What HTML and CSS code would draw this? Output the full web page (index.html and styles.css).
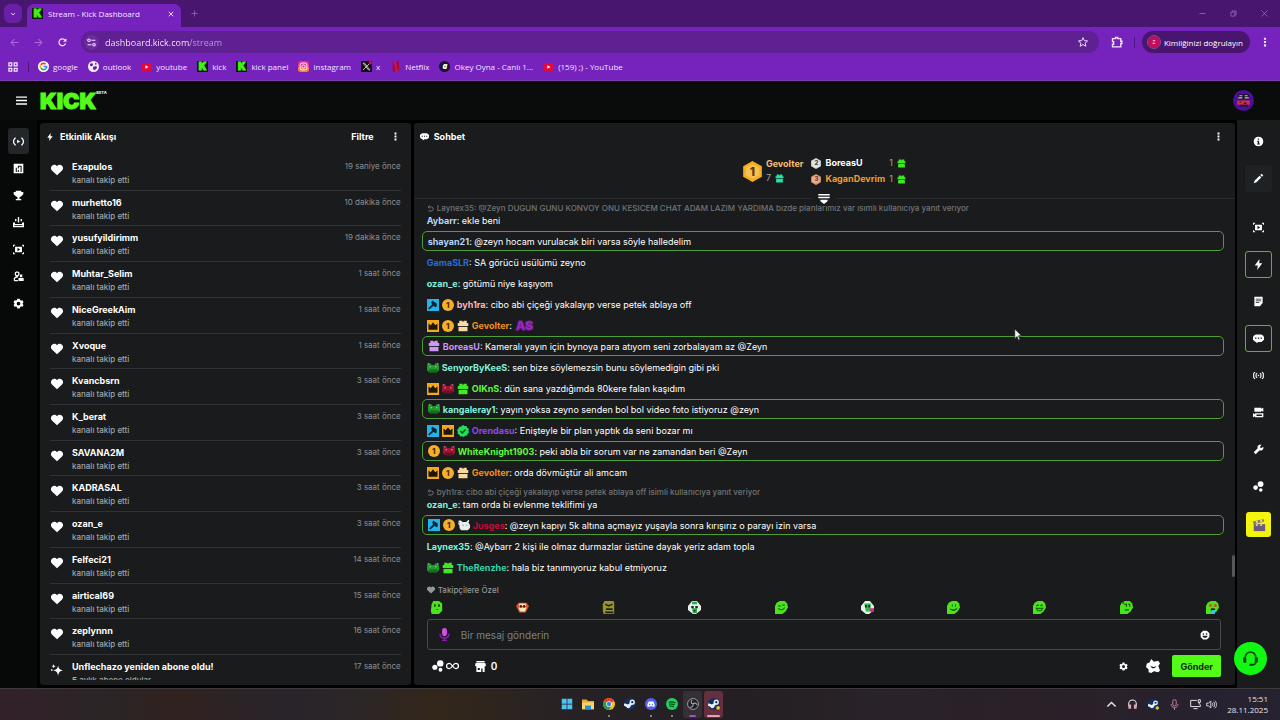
FILE: index.html
```html
<!DOCTYPE html>
<html lang="tr">
<head>
  <meta charset="UTF-8">
  <meta name="viewport" content="width=device-width, initial-scale=1.0">
  <title>Stream - Kick Dashboard</title>
  <link rel="stylesheet" href="styles.css">
</head>
<body>
  <!-- Icon sprite -->
  <svg class="sprite" aria-hidden="true">
    <symbol id="i-heart" viewBox="0 0 16 16"><path fill="currentColor" d="M8 15 1.600 9A4.600 4.600 0 0 1 1.400 2.400C3.200.5 6 .5 8 3c2-2.500 4.800-2.500 6.600-.6a4.600 4.600 0 0 1-.2 6.600z"/></symbol>
    <symbol id="i-spark" viewBox="0 0 16 16"><path fill="currentColor" d="M9.500 2c.9 4.400 1.800 5.400 6.500 6.500-4.700 1-5.600 2-6.500 7-.9-5-1.800-6-6.500-7C7.700 7.400 8.600 6.400 9.500 2zM3.500 0c.4 2 .8 2.500 2.800 3-2 .5-2.400 1-2.800 3C3 4 2.600 3.500.7 3 2.600 2.500 3 2 3.500 0zM0 7h2v2H0z"/></symbol>
    <symbol id="i-bolt" viewBox="0 0 16 16"><path fill="currentColor" d="M9.500 0 2.500 9.500H7L6 16l7.500-9.700H9z"/></symbol>
    <symbol id="i-dots" viewBox="0 0 16 16"><path fill="currentColor" d="M6.300 1h3.400v3.400H6.300zM6.300 6.300h3.400v3.400H6.300zM6.300 11.600h3.400V15H6.300z"/></symbol>
    <symbol id="i-chat" viewBox="0 0 16 16"><path fill="currentColor" fill-rule="evenodd" d="M4 2h8l3 2v1h1v5h-1v1l-3 2H8l-3 2v-2H4l-3-2v-1H0V5h1V4zM3 6.500v2h2v-2zm4 0v2h2v-2zm4 0v2h2v-2z"/></symbol>
    <symbol id="i-live" viewBox="0 0 16 16"><path fill="none" stroke="currentColor" stroke-width="1.800" d="M4 3H3L1 6v4l2 3h1M12 3h1l2 3v4l-2 3h-1"/><path fill="currentColor" d="M6 5.500v5L10.500 8z"/></symbol>
    <symbol id="i-chart" viewBox="0 0 16 16"><path fill="currentColor" fill-rule="evenodd" d="M1 1h14v14H1zm3 6v6h1.500V7zm3-3v4h1.500V5.500H11V13h1.500V4zM7 10v3h1.500v-3z"/></symbol>
    <symbol id="i-cup" viewBox="0 0 16 16"><path fill="currentColor" d="M4 1h8v2h3v3l-3 3-2.500 1.500V13H12v2H4v-2h2.500v-2.500L4 9 1 6V3h3z"/></symbol>
    <symbol id="i-tray" viewBox="0 0 16 16"><path fill="currentColor" fill-rule="evenodd" d="M7 0h2v8H7zM3 3h2v3H3zM11 3h2v3h-2zM0 8h3v2h10V8h3v7H0zm2 4v1h12v-1z"/></symbol>
    <symbol id="i-clip" viewBox="0 0 16 16"><path fill="currentColor" fill-rule="evenodd" d="M3 4h10v8H3zm3.500 1.500v5l4-2.500zM0 1h3v1.400H1.400V4H0zM13 1h3v3h-1.400V2.400H13zM0 12h1.400v1.600H3V15H0zM14.600 12H16v3h-3v-1.400h1.600z"/></symbol>
    <symbol id="i-users" viewBox="0 0 16 16"><path fill="none" stroke="currentColor" stroke-width="1.800" d="M3.500 2.500 5 1.500h2l1.500 1v3L7 7H5L3.500 5.500zM2 14v-3l2-2h3M2 14h5"/><path fill="currentColor" d="M10 5h3.500v4H10zM8 10h7.500v4.500H8z"/></symbol>
    <symbol id="i-gear" viewBox="0 0 16 16"><path fill="currentColor" fill-rule="evenodd" d="M6.300 1h3.400l.4 2 1.600.8 2-.6 1.600 2.900L14 7.500v1.200l1.300 1.400-1.600 2.800-2-.5-1.500.8-.5 1.900H6.300l-.5-1.900-1.500-.8-2 .5L.8 10.100 2.100 8.700V7.500L.8 6.100l1.600-2.900 2 .6L5.900 3zM8 5.400a2.700 2.700 0 1 0 0 5.400 2.700 2.700 0 0 0 0-5.400z"/></symbol>
    <symbol id="i-info" viewBox="0 0 16 16"><path fill="currentColor" fill-rule="evenodd" d="M8 1a7 7 0 1 1 0 14A7 7 0 0 1 8 1zM7 3.500v2h2v-2zM6 7v1.500h1V11H6v1.500h4V11H9V7z"/></symbol>
    <symbol id="i-pen" viewBox="0 0 16 16"><path fill="currentColor" d="M12.500 1 15 3.500l-2 2L10.500 3zM9.500 4 12 6.500 5 13.500 1 15l1.500-4z"/></symbol>
    <symbol id="i-note" viewBox="0 0 16 16"><path fill="currentColor" fill-rule="evenodd" d="M2 1h12v9l-4 5H2zm2 3v1h8V4zm0 2.500v1h8v-1zM4 9v1h5V9z"/></symbol>
    <symbol id="i-signal" viewBox="0 0 16 16"><path fill="none" stroke="currentColor" stroke-width="1.600" d="M3 3 1 5v6l2 2M6 4.500 4.500 6v4L6 11.500M13 3l2 2v6l-2 2M10 4.500 11.500 6v4L10 11.500"/><path fill="currentColor" d="M7 7h2v2H7z"/></symbol>
    <symbol id="i-cams" viewBox="0 0 16 16"><path fill="currentColor" fill-rule="evenodd" d="M2 1h10v1.500L15 1v6l-3-1.500V7H2zM0 9l3 1.500V9h12v6H3v-1.500L0 15zm5 2v2h8v-2z"/></symbol>
    <symbol id="i-wrench" viewBox="0 0 16 16"><path fill="currentColor" d="M9 1h3.500L10.300 3.500l.4 2 2 .4L15 3.600v3.600L12.500 9.500H9.300L4 15l-3-3 5.600-5.400V3.400z"/></symbol>
    <symbol id="i-points" viewBox="0 0 16 16"><g fill="currentColor"><circle cx="11" cy="4.500" r="4.300"/><circle cx="3.800" cy="9.600" r="3.400"/><circle cx="11.300" cy="13" r="2.600"/></g></symbol>
    <symbol id="i-reply" viewBox="0 0 16 16"><path fill="none" stroke="currentColor" stroke-width="2.200" d="M6 1 2.500 4.500 6 8M3 4.500h7.500L14 7v4l-2.500 2.500H3"/></symbol>
    <symbol id="i-gift" viewBox="0 0 16 16"><path fill="currentColor" d="M3 1h4l1 2 1-2h4v3h2v4H1V4h2zM2 9h12v6H2z"/><path d="M1 8h14v1H1z" fill="#000" opacity=".35"/></symbol>
    <symbol id="i-smile" viewBox="0 0 16 16"><path fill="currentColor" fill-rule="evenodd" d="M5 1h6l4 4v6l-4 4H5l-4-4V5zM4.500 5v2.500h2V5zm5 0v2.500h2V5zM4 9c.5 4.500 7.500 4.500 8 0z"/></symbol>
    <symbol id="b-mod" viewBox="0 0 16 16"><path fill="#21b4ea" d="M0 0h16v16H0z"/><path fill="#0b2532" d="m7 2 6 4v4l-2 1-2-2-6 5-1.500-1.500L7 7 5.500 5z"/></symbol>
    <symbol id="b-crown" viewBox="0 0 16 16"><path fill="#f6a81c" d="M0 0h16v16H0z"/><path fill="#1c1603" d="M2 4.500 5 7l3-4 3 4 3-2.500V13H2z"/></symbol>
    <symbol id="b-frog" viewBox="0 0 16 16"><path fill="currentColor" d="M1 2h4l1 2h4l1-2h4l1 3v6l-3 3H3l-3-3V5z"/><path fill="#000" opacity=".3" d="M2 10h12v4H3z"/><path fill="#fff" d="M3.500 5.500h1.500V7H3.500zM11 5.500h1.500V7H11zM1 2h2v1H1zM13 2h2v1h-2z" opacity=".8"/></symbol>
    <symbol id="b-check" viewBox="0 0 16 16"><path fill="#1fe05b" d="m8 0 2.100 1.400 2.500-.2 1 2.300 2.100 1.400L15.300 7.500l.7 2.400-1.900 1.600-.6 2.500-2.500.3L9 16l-2.300-1-2.500.2-1.100-2.300L.8 11.500l.3-2.500L0 6.600l1.900-1.600.5-2.500 2.500-.2z"/><path fill="none" stroke="#0b4a1e" stroke-width="2" d="m4.500 8 2.500 2.500L11.500 6"/></symbol>
    <symbol id="b-cat" viewBox="0 0 16 16"><path fill="#e8eeee" d="M1 2h3l2 2h5l3-3 1 1-1 3 2 3v4l-3 3H4l-2-3V9L0 6z"/><path fill="#6b8c92" d="M6 7.500h1.500V9H6zM11 7.500h1.500V9H11zM0 4h2v2H0z"/></symbol>
    <symbol id="b-hex" viewBox="0 0 16 18"><path fill="currentColor" d="m8 0 8 4.500v9L8 18l-8-4.500v-9z"/><path fill="#fff" opacity=".25" d="m8 2.500 5.800 3.300v6.400L8 15.500l-5.800-3.300V5.800z"/></symbol>
    <symbol id="l-yt" viewBox="0 0 16 12"><rect width="16" height="12" rx="3" fill="#e5093b"/><path fill="#fff" d="M6.300 3.300v5.400L11 6z"/></symbol>
    <symbol id="l-steam" viewBox="0 0 16 16"><circle cx="8" cy="8" r="8" fill="#12305e"/><path d="M0 8.500 6 11l5-5" stroke="#e8eef5" stroke-width="3.500" fill="none"/><circle cx="11" cy="5.500" r="3.500" fill="#e8eef5"/><circle cx="11" cy="5.500" r="1.500" fill="#12305e"/><circle cx="5.800" cy="11" r="2.600" fill="#e8eef5"/></symbol>
    <symbol id="e-blob" viewBox="0 0 16 16"><path fill="#4be31b" d="M6 0h6l3 3 1 5-3 5-4 3H0V6l2-4z"/></symbol>
  </svg>

  <div class="browser">
    <header class="chrome">
      <div class="tab-strip">
        <button class="tab-search" aria-label="Sekme ara"><svg viewBox="0 0 16 16"><path d="m3 5.500 5 5 5-5" fill="none" stroke="currentColor" stroke-width="2.500"/></svg></button>
        <div class="tab">
          <span class="k-icon">K</span>
          <span class="tab-title">Stream - Kick Dashboard</span>
          <button class="tab-close" aria-label="Kapat"><svg viewBox="0 0 16 16"><path d="m2 2 12 12M14 2 2 14" stroke="currentColor" stroke-width="2.500"/></svg></button>
        </div>
        <button class="new-tab" aria-label="Yeni sekme"><svg viewBox="0 0 16 16"><path d="M8 1v14M1 8h14" stroke="currentColor" stroke-width="1.500"/></svg></button>
        <div class="window-controls">
          <button aria-label="Simge durumu"><svg viewBox="0 0 16 16"><path d="M1 8h14" stroke="currentColor" stroke-width="1.500"/></svg></button>
          <button aria-label="Geri yükle"><svg viewBox="0 0 16 16"><path d="M2 5h9v9H2zM5 5V2h9v9h-3" fill="none" stroke="currentColor" stroke-width="1.500"/></svg></button>
          <button aria-label="Pencereyi kapat"><svg viewBox="0 0 16 16"><path d="m1 1 14 14M15 1 1 15" stroke="currentColor" stroke-width="1.500"/></svg></button>
        </div>
      </div>

      <div class="toolbar">
        <button class="nav-btn dim" aria-label="Geri"><svg viewBox="0 0 16 16"><path d="M15 8H2m6-6L2 8l6 6" fill="none" stroke="currentColor" stroke-width="1.800"/></svg></button>
        <button class="nav-btn dim" aria-label="İleri"><svg viewBox="0 0 16 16"><path d="M1 8h13M8 2l6 6-6 6" fill="none" stroke="currentColor" stroke-width="1.800"/></svg></button>
        <button class="nav-btn" aria-label="Yenile"><svg viewBox="0 0 16 16"><path d="M13.500 9.500A6 6 0 1 1 12.500 4" fill="none" stroke="currentColor" stroke-width="2.200"/><path d="M15 .5v6H9z" fill="currentColor"/></svg></button>
        <div class="omnibox">
          <button class="site-info" aria-label="Site bilgileri"><svg viewBox="0 0 16 16"><path d="M8 4h7M1 12h7" stroke="currentColor" stroke-width="2"/><circle cx="3.500" cy="4" r="2.300" fill="none" stroke="currentColor" stroke-width="1.800"/><circle cx="12.500" cy="12" r="2.300" fill="none" stroke="currentColor" stroke-width="1.800"/></svg></button>
          <input class="url" type="text" aria-label="Adres" value="dashboard.kick.com/stream">
          <button class="star" aria-label="Yer işareti"><svg viewBox="0 0 16 16"><path d="m8 1 2.100 4.800 5.200.5-3.900 3.400 1.200 5.100L8 12.100l-4.600 2.700 1.200-5.100L.7 6.300l5.200-.5z" fill="none" stroke="currentColor" stroke-width="1.500"/></svg></button>
        </div>
        <button class="ext" aria-label="Uzantılar"><svg viewBox="0 0 16 16"><path d="M2 3.500h4V2h3v1.500h4V7h1.500v3H13v4.500H2V11h1.500V7.500H2z" fill="none" stroke="currentColor" stroke-width="1.800"/></svg></button>
        <span class="toolbar-sep"></span>
        <button class="verify"><span class="verify-avatar">Z</span>Kimliğinizi doğrulayın</button>
        <button class="menu" aria-label="Menü"><svg><use href="#i-dots"/></svg></button>
      </div>

      <nav class="bookmarks">
        <button class="apps" aria-label="Sekme grupları"><svg viewBox="0 0 16 16"><path d="M1.500 1.500H6V6H1.500zM10 1.500h4.500V6H10zM1.500 10H6v4.500H1.500zM10 10h4.500v4.500H10z" fill="none" stroke="currentColor" stroke-width="2"/></svg></button>
        <span class="bookmark-sep"></span>
        <a href="#"><svg class="fav" viewBox="0 0 16 16"><circle cx="8" cy="8" r="8" fill="#fff"/><g fill="none" stroke-width="2.400"><path d="M4.200 5.600A4.500 4.500 0 0 1 11 4.600" stroke="#ea4335"/><path d="M4.200 5.600a4.500 4.500 0 0 0 0 4.800" stroke="#fbbc05"/><path d="M4.200 10.400a4.500 4.500 0 0 0 6.800 1" stroke="#34a853"/><path d="M8 8h4.500a4.500 4.500 0 0 1-1.500 3.400" stroke="#4285f4"/></g></svg>google</a>
        <a href="#"><svg class="fav" viewBox="0 0 16 16"><circle cx="8" cy="8" r="8" fill="#f3e9fb"/><path fill="#6320a0" d="M3 4c3-2 5 0 4 2S4 8 3 7zM9 8c3-1 4 0 4 1s-2 4-4 4-1-3-2-4zM10 2l3 2-2 2z"/></svg>outlook</a>
        <a href="#"><svg class="fav wide"><use href="#l-yt"/></svg>youtube</a>
        <a href="#"><span class="k-icon">K</span>kick</a>
        <a href="#"><span class="k-icon">K</span>kick panel</a>
        <a href="#"><svg class="fav" viewBox="0 0 16 16"><rect width="16" height="16" rx="4" fill="#e8308a"/><path d="M0 9h16v3a4 4 0 0 1-4 4H4a4 4 0 0 1-4-4z" fill="#fb7a3c"/><rect x="3" y="3" width="10" height="10" rx="3" fill="none" stroke="#fff" stroke-width="1.400"/><circle cx="8" cy="8" r="2.400" fill="none" stroke="#fff" stroke-width="1.400"/></svg>instagram</a>
        <a href="#"><svg class="fav" viewBox="0 0 16 16"><rect width="16" height="16" rx="1" fill="#111"/><path d="m3 3 8 10h2L5 3zM13 3 3 13" fill="none" stroke="#ddd" stroke-width="1.200"/><circle cx="13.500" cy="2.500" r="2.500" fill="#e5093b"/></svg>x</a>
        <a href="#"><svg class="fav" viewBox="0 0 16 16"><path d="M4 0h3v16H4zM10 0h3v16h-3z" fill="#a30a2e"/><path d="m4 0 6 16h3L7 0z" fill="#d80f36"/></svg>Netflix</a>
        <a href="#"><span class="okey">a</span>Okey Oyna - Canlı 1...</a>
        <a href="#"><svg class="fav wide"><use href="#l-yt"/></svg>(159) ;) - YouTube</a>
      </nav>
    </header>

    <header class="app-header">
      <button class="burger" aria-label="Menü"><svg viewBox="0 0 16 16"><path d="M0 3h16M0 8h16M0 13h16" stroke="currentColor" stroke-width="2"/></svg></button>
      <a class="logo" href="#">KICK<sup>BETA</sup></a>
      <button class="avatar" aria-label="Profil"><svg viewBox="0 0 20 20"><circle cx="10" cy="10" r="10" fill="#4c0f9c"/><path fill="#15101f" d="M5 4h10v5H5z"/><path fill="#c9bfd8" d="M5 7h4v1H5zM11 7h4v1h-4zM6 5h3v1H6zM11 5h3v1h-3z"/><path fill="#d92f3c" d="M4 10h12v4H4z"/><path fill="#2b1433" d="M6 11h2v1H6zM10 12h3v1h-3zM7 14h7v2H7z"/></svg></button>
    </header>

    <main class="app">
      <nav class="side-nav">
        <a class="active" href="#" aria-label="Yayın"><svg><use href="#i-live"/></svg></a>
        <a href="#" aria-label="Analizler"><svg><use href="#i-chart"/></svg></a>
        <a href="#" aria-label="Başarılar"><svg><use href="#i-cup"/></svg></a>
        <a href="#" aria-label="Drops"><svg><use href="#i-tray"/></svg></a>
        <a href="#" aria-label="Klipler"><svg><use href="#i-clip"/></svg></a>
        <a href="#" aria-label="Topluluk"><svg><use href="#i-users"/></svg></a>
        <a href="#" aria-label="Ayarlar"><svg><use href="#i-gear"/></svg></a>
      </nav>

      <section class="panel activity">
        <div class="panel-head">
          <svg class="head-icon"><use href="#i-bolt"/></svg>
          <h2>Etkinlik Akışı</h2>
          <button class="filter">Filtre</button>
          <button class="more" aria-label="Daha fazla"><svg><use href="#i-dots"/></svg></button>
        </div>
        <ul class="events">
          <li><svg><use href="#i-heart"/></svg><div><b>Exapulos</b><p>kanalı takip etti</p></div><time>19 saniye önce</time></li>
          <li><svg><use href="#i-heart"/></svg><div><b>murhetto16</b><p>kanalı takip etti</p></div><time>10 dakika önce</time></li>
          <li><svg><use href="#i-heart"/></svg><div><b>yusufyildirimm</b><p>kanalı takip etti</p></div><time>19 dakika önce</time></li>
          <li><svg><use href="#i-heart"/></svg><div><b>Muhtar_Selim</b><p>kanalı takip etti</p></div><time>1 saat önce</time></li>
          <li><svg><use href="#i-heart"/></svg><div><b>NiceGreekAim</b><p>kanalı takip etti</p></div><time>1 saat önce</time></li>
          <li><svg><use href="#i-heart"/></svg><div><b>Xvoque</b><p>kanalı takip etti</p></div><time>1 saat önce</time></li>
          <li><svg><use href="#i-heart"/></svg><div><b>Kvancbsrn</b><p>kanalı takip etti</p></div><time>3 saat önce</time></li>
          <li><svg><use href="#i-heart"/></svg><div><b>K_berat</b><p>kanalı takip etti</p></div><time>3 saat önce</time></li>
          <li><svg><use href="#i-heart"/></svg><div><b>SAVANA2M</b><p>kanalı takip etti</p></div><time>3 saat önce</time></li>
          <li><svg><use href="#i-heart"/></svg><div><b>KADRASAL</b><p>kanalı takip etti</p></div><time>3 saat önce</time></li>
          <li><svg><use href="#i-heart"/></svg><div><b>ozan_e</b><p>kanalı takip etti</p></div><time>3 saat önce</time></li>
          <li><svg><use href="#i-heart"/></svg><div><b>Felfeci21</b><p>kanalı takip etti</p></div><time>14 saat önce</time></li>
          <li><svg><use href="#i-heart"/></svg><div><b>airtical69</b><p>kanalı takip etti</p></div><time>15 saat önce</time></li>
          <li><svg><use href="#i-heart"/></svg><div><b>zeplynnn</b><p>kanalı takip etti</p></div><time>16 saat önce</time></li>
          <li class="cut"><svg><use href="#i-spark"/></svg><div><b>Unflechazo yeniden abone oldu!</b><p><em>5</em> aylık abone oldular</p></div><time>17 saat önce</time></li>
        </ul>
      </section>

      <section class="panel chat">
        <div class="panel-head">
          <svg class="head-icon"><use href="#i-chat"/></svg>
          <h2>Sohbet</h2>
          <button class="more" aria-label="Daha fazla"><svg><use href="#i-dots"/></svg></button>
        </div>

        <!-- Gift leaderboard -->
        <div class="leaders">
          <span class="medal gold"><svg><use href="#b-hex"/></svg><i>1</i></span>
          <div class="first">
            <b class="c-peach">Gevolter</b>
            <span class="count c-mint"><i>7</i><svg><use href="#i-gift"/></svg></span>
          </div>
          <div class="others">
            <span class="medal silver"><svg><use href="#b-hex"/></svg><i>2</i></span><b>BoreasU</b><span class="count c-green"><i>1</i><svg><use href="#i-gift"/></svg></span>
            <span class="medal bronze"><svg><use href="#b-hex"/></svg><i>3</i></span><b class="c-orange">KaganDevrim</b><span class="count c-green"><i>1</i><svg><use href="#i-gift"/></svg></span>
          </div>
        </div>
        <div class="divider"><button aria-label="Genişlet"><svg viewBox="0 0 16 14"><path fill="currentColor" d="M0 0h16v2H0zM0 4h16v2H0zM3 8h10v2l-5 4-5-4z"/></svg></button></div>

        <div class="messages">
          <div class="msg reply"><p class="quote"><svg><use href="#i-reply"/></svg>Laynex35: @Zeyn DÜĞÜN GÜNÜ KONVOY ÖNÜ KESİCEM CHAT ADAM LAZIM YARDIMA bizde planlarımız var isimli kullanıcıya yanıt veriyor</p><p><b class="c-sky">Aybarr</b><span>: ekle beni</span></p></div>
          <p class="msg mention"><b class="c-sky">shayan21</b><span>: @zeyn hocam vurulacak biri varsa söyle halledelim</span></p>
          <p class="msg"><b class="c-blue">GamaSLR</b><span>: SA görücü usülümü zeyno</span></p>
          <p class="msg"><b class="c-aqua">ozan_e</b><span>: götümü niye kaşıyom</span></p>
          <p class="msg"><svg><use href="#b-mod"/></svg><i class="one">1</i><b class="c-rose">byh1ra</b><span>: cibo abi çiçeği yakalayıp verse petek ablaya off</span></p>
          <p class="msg"><svg><use href="#b-crown"/></svg><i class="one">1</i><svg class="c-cream"><use href="#i-gift"/></svg><b class="c-amber">Gevolter</b><span>:</span><strong class="as-emote">AS</strong></p>
          <p class="msg mention"><svg class="c-lilac"><use href="#i-gift"/></svg><b class="c-lilac">BoreasU</b><span>: Kameralı yayın için bynoya para atıyom seni zorbalayam az @Zeyn</span></p>
          <p class="msg"><svg class="frog"><use href="#b-frog"/></svg><b class="c-aqua">SenyorByKeeS</b><span>: sen bize söylemezsin bunu söylemedigin gibi pki</span></p>
          <p class="msg"><svg><use href="#b-crown"/></svg><svg class="frog-red"><use href="#b-frog"/></svg><svg class="c-green"><use href="#i-gift"/></svg><b class="c-lime">OIKnS</b><span>: dün sana yazdığımda 80kere falan kaşıdım</span></p>
          <p class="msg mention"><svg class="frog"><use href="#b-frog"/></svg><b class="c-aqua">kangaleray1</b><span>: yayın yoksa zeyno senden bol bol video foto istiyoruz @zeyn</span></p>
          <p class="msg"><svg><use href="#b-mod"/></svg><svg><use href="#b-crown"/></svg><svg><use href="#b-check"/></svg><b class="c-violet">Orendasu</b><span>: Enişteyle bir plan yaptık da seni bozar mı</span></p>
          <p class="msg mention"><i class="one">1</i><svg class="frog-red"><use href="#b-frog"/></svg><b class="c-lime">WhiteKnight1903</b><span>: peki abla bir sorum var ne zamandan beri @Zeyn</span></p>
          <p class="msg"><svg><use href="#b-crown"/></svg><i class="one">1</i><svg class="c-cream"><use href="#i-gift"/></svg><b class="c-amber">Gevolter</b><span>: orda dövmüştür ali amcam</span></p>
          <div class="msg reply"><p class="quote"><svg><use href="#i-reply"/></svg>byh1ra: cibo abi çiçeği yakalayıp verse petek ablaya off isimli kullanıcıya yanıt veriyor</p><p><b class="c-aqua">ozan_e</b><span>: tam orda bi evlenme teklifimi ya</span></p></div>
          <p class="msg mention"><svg><use href="#b-mod"/></svg><i class="one">1</i><svg><use href="#b-cat"/></svg><b class="c-red">Jusges</b><span>: @zeyn kapıyı 5k altına açmayız yuşayla sonra kırışırız o parayı izin varsa</span></p>
          <p class="msg"><b class="c-aqua">Laynex35</b><span>: @Aybarr 2 kişi ile olmaz durmazlar üstüne dayak yeriz adam topla</span></p>
          <p class="msg"><svg class="frog"><use href="#b-frog"/></svg><svg class="c-green"><use href="#i-gift"/></svg><b class="c-teal">TheRenzhe</b><span>: hala biz tanımıyoruz kabul etmiyoruz</span></p>
          <span class="scroll-thumb"></span>
        </div>

        <form class="composer">
          <p class="followers"><svg><use href="#i-heart"/></svg>Takipçilere Özel</p>
          <div class="emotes">
            <button type="button" aria-label="Emote 1"><svg viewBox="0 0 16 16"><path fill="#4be31b" d="M4 0h7l4 3v9l-4 4H2l-1-4 1-8z"/><path fill="#0d3a04" d="M5 4h2v3H5zM10 4h2v3h-2zM8 10h2v1H8z"/></svg></button>
            <button type="button" aria-label="Emote 2"><svg viewBox="0 0 16 16"><path fill="#d9522e" d="M3 2h10l3 4-2 4-2 4H4l-2-4-2-4z"/><path fill="#f3e9b8" d="M4 3h8v3H4zM3 8h10l-2 5H5z"/><path fill="#391008" d="M5 5h2v3H5zM9 5h2v3H9z"/></svg></button>
            <button type="button" aria-label="Emote 3"><svg viewBox="0 0 16 16"><path fill="#99942b" d="M3 0h11l1 2v14H2l-1-4V4z"/><path fill="#201f08" d="m4 3 4 2 5-2v2L8 7 4 5zM5 9h8v2H5zM4 13h10v2H4z"/></svg></button>
            <button type="button" aria-label="Emote 4"><svg viewBox="0 0 16 16"><path fill="#e9efe9" d="M5 0h6l5 6v5l-6 5H6l-6-5V6z"/><path fill="#20b04a" d="M5 1h6v3H5zM5 9h6v6H6z"/><path fill="#14251a" d="M4 6h3v3H4zM9 6h3v3H9zM7 11h2v2H7z"/></svg></button>
            <button type="button" aria-label="Emote 5"><svg viewBox="0 0 16 16"><use href="#e-blob"/><path fill="none" stroke="#14670a" stroke-width="1.400" d="M4 6h3M9 5h3M4 9c3 3 6 2 8-1"/></svg></button>
            <button type="button" aria-label="Emote 6"><svg viewBox="0 0 16 16"><path fill="#e9efe9" d="M5 0h6l5 6v5l-6 5H6l-6-5V6z"/><path fill="#20c04a" d="M4 3h8v10H6z"/><path fill="#14251a" d="M5 5h2v3H5zM9 5h2v3H9z"/><path fill="#d72c86" d="M11 9h5v4l-3 1-2-2z"/></svg></button>
            <button type="button" aria-label="Emote 7"><svg viewBox="0 0 16 16"><use href="#e-blob"/><path fill="#14560a" d="M6 4h1v3H6zM10 4h1v3h-1zM3 9c3 2 7 2 10-1-1 5-7 6-10 1z"/></svg></button>
            <button type="button" aria-label="Emote 8"><svg viewBox="0 0 16 16"><use href="#e-blob"/><path fill="none" stroke="#14670a" stroke-width="1.400" d="M4 6l2-1 1 1M9 6l2-1 1 1M4 9h8l-2 3H6z"/></svg></button>
            <button type="button" aria-label="Emote 9"><svg viewBox="0 0 16 16"><use href="#e-blob"/><path fill="none" stroke="#14560a" stroke-width="1.400" d="M5 4h3v3M10 4h2v3M6 11h5M3 3l2-1"/></svg></button>
            <button type="button" aria-label="Emote 10"><svg viewBox="0 0 16 16"><use href="#e-blob"/><path fill="#e23b2d" d="M4 4h3v3H4zM10 4h3v3h-3z"/><path fill="#471d06" d="M6 9h5v3H6z"/><path fill="#35c7e6" d="M7 11h4v5H7z"/></svg></button>
          </div>
          <div class="message-box">
            <button type="button" class="mic" aria-label="Mikrofon"><svg viewBox="0 0 16 16"><rect x="5" y="0" width="6" height="10" rx="3" fill="#d053e6"/><path d="M2.500 7c0 7 11 7 11 0M8 12v4M5 15.500h6" fill="none" stroke="#8d17b5" stroke-width="1.800"/></svg></button>
            <input type="text" aria-label="Mesaj" placeholder="Bir mesaj gönderin">
            <button type="button" class="smile" aria-label="Emoji"><svg><use href="#i-smile"/></svg></button>
          </div>
          <div class="actions">
            <button type="button" class="points" aria-label="Kanal puanı"><svg><use href="#i-points"/></svg><svg class="inf" viewBox="0 0 24 14"><path d="M12 7C9 2.500 7.500 2 6 2a5 5 0 0 0 0 10c1.500 0 3-.5 6-5s4.500-5 6-5a5 5 0 0 1 0 10c-1.500 0-3-.5-6-5z" fill="none" stroke="currentColor" stroke-width="2.400"/></svg></button>
            <button type="button" class="shop"><svg viewBox="0 0 16 16"><path fill="currentColor" fill-rule="evenodd" d="M2 0h12v2H2zM1 3h14l1 4-2 1v8h-3v-5H9v5H2V8L0 7zm3 7v3h3v-3z"/></svg>0</button>
            <button type="button" class="settings" aria-label="Sohbet ayarları"><svg><use href="#i-gear"/></svg></button>
            <button type="button" class="sticker" aria-label="Çıkartma"><svg viewBox="0 0 16 16"><path fill="currentColor" d="m6 0 3 3 5-1 2 3-2 3 2 5-2 2-5-1-3 2-3-1v-3L0 9l1-4 3-1z"/><path d="M5 8c2 4 5 3 7 0L9 9z" fill="#191b1c"/></svg></button>
            <button type="submit" class="send">Gönder</button>
          </div>
        </form>
      </section>

      <aside class="tools">
        <button aria-label="Bilgi"><svg><use href="#i-info"/></svg></button>
        <button class="edit" aria-label="Düzenle"><svg><use href="#i-pen"/></svg></button>
        <button aria-label="Klip"><svg><use href="#i-clip"/></svg></button>
        <button class="on" aria-label="Etkinlik akışı"><svg><use href="#i-bolt"/></svg></button>
        <button aria-label="Notlar"><svg><use href="#i-note"/></svg></button>
        <button class="on" aria-label="Sohbet"><svg><use href="#i-chat"/></svg></button>
        <button aria-label="Yayın durumu"><svg><use href="#i-signal"/></svg></button>
        <button aria-label="Önizleme"><svg><use href="#i-cams"/></svg></button>
        <button aria-label="Moderasyon"><svg><use href="#i-wrench"/></svg></button>
        <button aria-label="Puanlar"><svg><use href="#i-points"/></svg></button>
        <button class="movie" aria-label="Medya"><svg viewBox="0 0 16 16"><path fill="#6d5a80" d="M2 7h13v8H2z"/><path fill="#8a7a68" d="M1 4l12-3 1 3L2 7z"/><path fill="#e9e2a0" d="m4 3.300 2-.5 1 2.400-2 .5zM9 2l2-.5 1 2.500-2 .5zM5 7h2l-1 2H4zM10 7h2l-1 2H9z"/></svg></button>
      </aside>
    </main>
    <button class="support" aria-label="Destek"><svg viewBox="0 0 16 16"><path d="M3 9V7a5 5 0 0 1 10 0v2M13 11c0 2-2 3-4 3" fill="none" stroke="#064d06" stroke-width="1.600"/><path fill="#064d06" d="M1 7h3v5H2L1 11zM12 7h3v4l-1 1h-2zM7 13h3v2H7z"/></svg></button>
    <svg class="cursor" viewBox="0 0 12 18"><path d="M1 1v13l3-3 2 5 2-1-2-5h4z" fill="#fff" stroke="#222" stroke-width="1"/></svg>
  </div>

  <footer class="taskbar">
    <div class="apps-row">
      <button aria-label="Başlat"><svg viewBox="0 0 16 16"><path fill="#4cc3f2" d="M1 1h6.500v6.500H1zM8.500 1H15v6.500H8.500zM1 8.500h6.500V15H1zM8.500 8.500H15V15H8.500z"/></svg></button>
      <button aria-label="Dosya Gezgini"><svg viewBox="0 0 16 16"><path fill="#e9a92b" d="M0 2h6l2 2h8v11H0z"/><path fill="#fbd667" d="M0 6h16v9H0z"/><path fill="#2f8fd6" d="M4 10h8v5H4z"/></svg></button>
      <button class="running" aria-label="Chrome"><svg viewBox="0 0 16 16"><circle cx="8" cy="8" r="8" fill="#fbc116"/><path fill="#e33b2e" d="M8 8 1.100 4a8 8 0 0 1 13.800 0z"/><path fill="#229a4b" d="M8 8 1.100 4A8 8 0 0 0 8 16l3-5z"/><circle cx="8" cy="8" r="3.800" fill="#fff"/><circle cx="8" cy="8" r="2.900" fill="#3a7de8"/></svg></button>
      <button aria-label="Steam"><svg><use href="#l-steam"/></svg></button>
      <button class="running" aria-label="Discord"><svg viewBox="0 0 16 16"><circle cx="8" cy="8" r="8" fill="#5561ea"/><path fill="#fff" fill-rule="evenodd" d="M5 4.500h6l1.500 3 .5 3.500-2.500 1-.7-1H6.200l-.7 1L3 11l.5-3.500zM5.500 7.500v2h1.500v-2zm3.500 0v2h1.500v-2z"/></svg></button>
      <button class="running" aria-label="Spotify"><svg viewBox="0 0 16 16"><circle cx="8" cy="8" r="8" fill="#1ed05e"/><path d="M3.500 5.700c3-.9 6.500-.5 9 .9M4 8.400c2.500-.7 5.300-.4 7.500.8M4.500 10.900c2-.5 4-.3 6 .7" fill="none" stroke="#0a3318" stroke-width="1.400"/></svg></button>
      <button class="open" aria-label="OBS"><svg viewBox="0 0 16 16"><circle cx="8" cy="8" r="7.300" fill="#201f24" stroke="#a5a5aa" stroke-width="1.200"/><g fill="none" stroke="#a5a5aa" stroke-width="1.500"><path d="M8 8C5 7 5 4 7 2.500M8 8c2-2 5-1 5.500 1.500M8 8c1 3-2 5-4.500 4"/></g></svg></button>
      <button class="open current" aria-label="Steam penceresi"><svg viewBox="0 0 16 16"><use href="#l-steam"/><circle cx="13.500" cy="13" r="2.500" fill="#f3c32c"/></svg></button>
    </div>
    <div class="tray">
      <button aria-label="Gizli simgeler"><svg viewBox="0 0 16 16"><path d="m2 11 6-6 6 6" fill="none" stroke="currentColor" stroke-width="2"/></svg></button>
      <button aria-label="Kulaklık"><svg viewBox="0 0 16 16"><path d="M2.500 11V7a5.500 5.500 0 0 1 11 0v4" fill="none" stroke="currentColor" stroke-width="1.600"/><path fill="#d9a5b5" d="M2 8h4v6H2zM10 8h4v6h-4z"/></svg></button>
      <button aria-label="Steam"><svg viewBox="0 0 16 16"><use href="#l-steam"/><circle cx="13.500" cy="13" r="2.500" fill="#f3c32c"/></svg></button>
      <button class="tray-mic" aria-label="Mikrofon"><svg viewBox="0 0 16 16"><rect x="5.500" y="1" width="5" height="9" rx="2.500" fill="none" stroke="currentColor" stroke-width="1.400"/><path d="M3 7.500c0 6.500 10 6.500 10 0M8 12.500V16" fill="none" stroke="currentColor" stroke-width="1.400"/></svg></button>
      <button class="net" aria-label="Ağ ve ses">
        <svg viewBox="0 0 16 16"><path d="M10 2H1v9h14V8M5 14h6M12 1h3v4h-3zM13.500 5v3" fill="none" stroke="currentColor" stroke-width="1.400"/></svg>
        <svg viewBox="0 0 16 16"><path d="M1 6h2.500L7 3v10l-3.500-3H1zM9 6c1 1 1 3 0 4M11 4c2 2 2 6 0 8M13 2.500c3 3 3 8 0 11" fill="none" stroke="currentColor" stroke-width="1.300"/></svg>
      </button>
      <button class="clock">15:51<br>28.11.2025</button>
    </div>
  </footer>
</body>
</html>
```

FILE: styles.css
```css
* {
  box-sizing: border-box;
}

body {
  font-family: Inter, "Liberation Sans", sans-serif;
  margin: 0;
  height: 100vh;
  display: flex;
  flex-direction: column;
  background-color: #000;
  color: #fff;
  overflow: hidden;
}

h2, p, ul {
  margin: 0;
  padding: 0;
}

button {
  display: flex;
  align-items: center;
  justify-content: center;
  padding: 0;
  border: none;
  background: none;
  color: inherit;
  font: inherit;
  cursor: pointer;
}

input {
  min-width: 0;
  padding: 0;
  border: none;
  outline: none;
  background: none;
  color: inherit;
  font: inherit;
}

a {
  color: inherit;
  text-decoration: none;
}

svg {
  display: block;
  flex: none;
  width: 12px;
  height: 12px;
}

i, em {
  font-style: normal;
}

.sprite {
  position: absolute;
  width: 0;
  height: 0;
}

.browser {
  position: relative;
  flex: 1;
  min-height: 0;
  display: flex;
  flex-direction: column;
}

/* Browser chrome */
.chrome {
  background-color: #7622bd;
  color: #f3e6ff;
  font-family: "Open Sans", "Noto Sans", sans-serif;
  font-size: 8px;
  font-weight: 500;
  height: 81px;
  flex: none;
  border-bottom: 1px solid #7d3fae;
}

.tab-strip {
  height: 27px;
  display: flex;
  align-items: center;
  background-color: #48166e;
  padding-left: 4px;
}

.tab-search {
  width: 18px;
  height: 19px;
  border-radius: 6px;
  background-color: #6a1fa8;
}

.tab-search svg {
  width: 6px;
  height: 6px;
}

.tab {
  display: flex;
  align-items: center;
  align-self: flex-end;
  gap: 5px;
  width: 154px;
  height: 23px;
  margin-left: 5px;
  padding: 0 7px 4px 5px;
  border-radius: 7px 7px 0 0;
  background-color: #7622bd;
}

.tab-title {
  flex: 1;
}

.tab-close svg {
  width: 6px;
  height: 6px;
}

.new-tab {
  margin-left: 10px;
  color: #a678cc;
}

.new-tab svg {
  width: 7px;
  height: 7px;
}

.k-icon {
  display: flex;
  align-items: center;
  justify-content: center;
  width: 11px;
  height: 11px;
  background-color: #0b1a08;
  color: #45f01b;
  font-family: Inter, sans-serif;
  font-size: 10px;
  font-weight: 900;
  line-height: 11px;
  -webkit-text-stroke: 1px #45f01b;
}

.window-controls {
  display: flex;
  gap: 24px;
  margin-left: auto;
  padding-right: 12px;
  color: #a678cc;
}

.window-controls svg {
  width: 7px;
  height: 7px;
}

.toolbar {
  display: flex;
  align-items: center;
  height: 30px;
  padding: 0 10px 0 9px;
}

.nav-btn {
  width: 10px;
  margin-right: 14px;
}

.nav-btn svg {
  width: 9px;
  height: 9px;
}

.dim {
  color: #a76bd6;
}

.omnibox {
  display: flex;
  align-items: center;
  flex: 1;
  height: 22px;
  padding: 0 11px 0 3px;
  border-radius: 11px;
  background-color: #5f2092;
}

.site-info {
  width: 15px;
  height: 15px;
  border-radius: 8px;
  background-color: #6d2aa3;
}

.site-info svg {
  width: 9px;
  height: 9px;
}

.url {
  flex: 1;
  margin-left: 6px;
  font-size: 9px;
  background: linear-gradient(to right, #fbf5ff 85px, #c19fdd 85px) text;
  -webkit-text-fill-color: transparent;
}

.star svg {
  width: 10px;
  height: 10px;
}

.ext {
  margin-left: 12px;
}

.toolbar-sep {
  width: 1px;
  height: 11px;
  margin: 0 7px 0 11px;
  background-color: #4c1680;
}

.verify {
  gap: 4px;
  height: 22px;
  padding: 0 7px 0 6px;
  border-radius: 11px;
  background-color: #48166e;
  color: #fff;
}

.verify-avatar {
  width: 12px;
  height: 12px;
  border-radius: 6px;
  outline: 1px solid #8a4a8c;
  background-color: #c50c5b;
  font-size: 5px;
  line-height: 12px;
}

.menu {
  margin-left: 10px;
}

.menu svg {
  width: 10px;
  height: 10px;
}

.bookmarks {
  display: flex;
  align-items: center;
  gap: 10px;
  height: 19px;
  padding-left: 8px;
}

.bookmarks a {
  display: flex;
  align-items: center;
  gap: 4px;
  white-space: nowrap;
}

.apps svg {
  width: 10px;
  height: 10px;
}

.bookmark-sep {
  width: 1px;
  height: 10px;
  margin-right: -1px;
  background-color: #4c1680;
}

.fav {
  width: 11px;
  height: 11px;
}

.wide {
  height: 8px;
}

.okey {
  width: 11px;
  height: 11px;
  border-radius: 6px;
  background-color: #181433;
  color: #fff;
  font-weight: 800;
  font-style: italic;
  line-height: 10px;
  text-align: center;
}

/* Dashboard header */
.app-header {
  display: flex;
  align-items: center;
  flex: none;
  height: 39px;
  padding: 0 26px 0 16px;
  background-color: #0a0b0b;
}

.burger svg {
  width: 11px;
  height: 11px;
}

.logo {
  display: flex;
  margin-left: 13px;
  color: #53fc18;
  font-size: 22px;
  font-weight: 900;
  line-height: 24px;
  -webkit-text-stroke: 1px #53fc18;
}

.logo sup {
  color: #e8e8e8;
  font-size: 4px;
  font-weight: 800;
  line-height: 8px;
  -webkit-text-stroke: 0;
}

.avatar {
  margin-left: auto;
}

.avatar svg {
  width: 21px;
  height: 21px;
}

.app {
  display: flex;
  flex: 1;
  min-height: 0;
}

.side-nav {
  display: flex;
  flex-direction: column;
  gap: 1px;
  width: 37px;
  padding: 8px;
  background-color: #070808;
}

.side-nav a {
  display: flex;
  align-items: center;
  justify-content: center;
  height: 26px;
  border-radius: 3px;
}

.side-nav .active {
  background-color: #24272a;
}

.side-nav svg {
  width: 11px;
  height: 11px;
}

.panel {
  display: flex;
  flex-direction: column;
  min-width: 0;
  margin: 3px 0 3px 3px;
  border-radius: 3px;
  background-color: #191b1c;
}

.panel-head {
  display: flex;
  align-items: center;
  flex: none;
  height: 27px;
  padding: 0 11px 0 6px;
}

.panel-head h2 {
  flex: 1;
  margin-left: 6px;
  font-size: 9px;
  font-weight: 700;
}

.head-icon {
  width: 8px;
  height: 8px;
}

.filter {
  font-size: 9px;
  font-weight: 700;
}

.more {
  margin-left: 17px;
}

.more svg {
  width: 9px;
  height: 9px;
}

/* Activity feed */
.activity {
  flex: 311 1 0;
}

.events {
  display: flex;
  flex-direction: column;
  flex: 1;
  min-height: 0;
  margin: 5px 10px;
  list-style: none;
}

.events li {
  display: flex;
  flex: 1;
  min-height: 0;
  padding: 4px 0 0 1px;
  border-bottom: 1px solid #303335;
}

.events li > svg {
  margin-top: 5px;
}

.events div {
  flex: 1;
  margin-left: 9px;
}

.events b {
  display: block;
  font-size: 9px;
  font-weight: 700;
  line-height: 15px;
}

.events p {
  color: #a0a6a8;
  font-size: 8px;
  font-weight: 500;
  line-height: 13px;
}

.events em {
  color: #53fc18;
  font-weight: 700;
}

.events time {
  color: #8b9193;
  font-size: 8px;
  line-height: 15px;
}

.events .cut {
  flex: 0 0 25px;
  border: none;
  overflow: hidden;
}

/* Chat */
.chat {
  flex: 689 1 0;
}

.chat .head-icon {
  width: 9px;
  height: 9px;
}

.chat .panel-head {
  padding-right: 12px;
}

.chat .panel-head h2 {
  margin-left: 5px;
}

.leaders {
  display: flex;
  align-items: center;
  justify-content: center;
  height: 42px;
  font-size: 9px;
}

.leaders b {
  font-weight: 700;
}

.medal {
  display: grid;
  place-items: center;
  color: #d9dadb;
}

.medal svg, .medal i {
  grid-area: 1 / 1;
}

.medal svg {
  width: 10px;
  height: 11px;
}

.medal i {
  position: relative;
  color: #444;
  font-size: 6px;
  font-weight: 800;
}

.gold {
  margin-right: 4px;
  color: #f6ad1b;
}

.gold svg {
  width: 19px;
  height: 21px;
}

.gold i {
  color: #5f3802;
  font-size: 12px;
}

.bronze {
  color: #dc9873;
}

.bronze i {
  color: #763b20;
}

.first {
  display: flex;
  flex-direction: column;
  line-height: 14px;
}

.count {
  display: flex;
  align-items: center;
  gap: 4px;
}

.count i {
  color: #a0a6a8;
}

.count svg {
  width: 9px;
  height: 9px;
}

.others {
  display: grid;
  grid-template-columns: 10px auto auto;
  gap: 0 4px;
  margin-left: 8px;
  line-height: 16px;
}

.divider {
  display: flex;
  align-items: center;
  height: 13px;
}

.divider::before, .divider::after {
  content: "";
  flex: 1;
  height: 1px;
  background-color: #292c2e;
}

.divider button {
  margin: 0 6px;
}

.divider svg {
  height: 10px;
}

.messages {
  position: relative;
  display: flex;
  flex-direction: column;
  justify-content: flex-end;
  flex: 1;
  min-height: 0;
  padding: 0 11px 0 8px;
  overflow: hidden;
}

.msg {
  display: flex;
  align-items: center;
  flex: none;
  height: 21px;
  padding-left: 5px;
  font-size: 9px;
  white-space: pre;
}

.msg b {
  font-weight: 700;
}

.msg svg {
  margin-right: 3px;
}

.mention {
  height: 20px;
  margin-bottom: 1px;
  border: 1px solid #4c9e35;
  border-radius: 5px;
}

.reply {
  display: block;
  height: 32px;
  padding-top: 3px;
}

.reply p {
  line-height: 13px;
}

.reply .quote {
  display: flex;
  align-items: center;
  color: #707577;
  font-size: 8px;
  font-weight: 500;
  line-height: 12px;
}

.quote svg {
  width: 7px;
  height: 7px;
}

.one {
  width: 12px;
  height: 12px;
  margin-right: 3px;
  border-radius: 6px;
  background-color: #f6af2a;
  color: #4a2d02;
  font-size: 8px;
  font-weight: 800;
  line-height: 12px;
  text-align: center;
}

.as-emote {
  margin-left: 4px;
  color: #a12fc4;
  font-size: 12px;
  font-weight: 900;
  -webkit-text-stroke: 1px #7d1fa0;
}

.scroll-thumb {
  position: absolute;
  right: 0;
  bottom: 1px;
  width: 3px;
  height: 22px;
  border-radius: 2px;
  background-color: #55585a;
}

.frog { color: #1f9a2c; }
.frog-red { color: #a01434; }
.c-peach { color: #f9bf72; }
.c-mint { color: #25e2a8; }
.c-green { color: #3fea25; }
.c-orange { color: #f09a30; }
.c-sky { color: #b4d6fb; }
.c-blue { color: #2a6cd8; }
.c-aqua { color: #82f2dc; }
.c-rose { color: #f5b5c0; }
.c-amber { color: #ef8e1d; }
.c-cream { color: #fbd9a2; }
.c-lilac { color: #cd96f7; }
.c-lime { color: #5dfb3a; }
.c-violet { color: #9148ec; }
.c-red { color: #c50a3a; }
.c-teal { color: #2fd6a8; }

/* Message form */
.composer {
  flex: none;
  padding: 5px 14px 8px 13px;
}

.followers {
  display: flex;
  align-items: center;
  gap: 3px;
  height: 13px;
  color: #92989a;
  font-size: 8px;
  font-weight: 500;
}

.followers svg {
  width: 8px;
  height: 8px;
}

.emotes {
  display: flex;
  justify-content: space-between;
  height: 23px;
  padding: 0 2px 0 3px;
}

.emotes svg {
  width: 13px;
  height: 13px;
}

.message-box {
  display: flex;
  align-items: center;
  height: 31px;
  padding: 0 10px;
  border: 1px solid #474b4e;
  border-radius: 3px;
}

.message-box input {
  flex: 1;
  margin-left: 10px;
  font-size: 10px;
}

.message-box input::placeholder {
  color: #7c8284;
}

.mic svg {
  width: 13px;
  height: 13px;
}

.smile svg {
  width: 10px;
  height: 10px;
}

.actions {
  display: flex;
  align-items: center;
  margin-top: 5px;
  padding-left: 5px;
}

.points {
  gap: 2px;
}

.points .inf {
  width: 13px;
  height: 8px;
}

.shop {
  gap: 5px;
  margin-left: 16px;
  font-size: 10px;
  font-weight: 600;
}

.shop svg {
  width: 11px;
  height: 11px;
}

.settings {
  margin-left: auto;
}

.settings svg {
  width: 9px;
  height: 9px;
}

.sticker {
  margin: 0 12px 0 18px;
}

.sticker svg {
  width: 14px;
  height: 14px;
}

.send {
  height: 22px;
  padding: 0 8px;
  border-radius: 2px;
  background-color: #53fc18;
  color: #0d2a04;
  font-size: 9px;
  font-weight: 700;
}

/* Right rail */
.tools {
  display: flex;
  flex-direction: column;
  align-items: center;
  gap: 10px;
  width: 43px;
  margin-left: 2px;
  padding-top: 8px;
  background-color: #191b1c;
}

.tools button {
  width: 27px;
  height: 27px;
  border: 1px solid transparent;
  border-radius: 3px;
}

.tools svg {
  width: 11px;
  height: 11px;
}

.tools .edit {
  margin-bottom: 12px;
  background-color: #1f2224;
}

.tools .on {
  border-color: #55b53a;
}

.tools .movie {
  width: 25px;
  height: 25px;
  margin-top: 2px;
  background-color: #f4f40c;
}

.tools .movie svg {
  width: 14px;
  height: 14px;
}

.support {
  position: absolute;
  right: 13px;
  bottom: 13px;
  width: 33px;
  height: 33px;
  border-radius: 17px;
  background-color: #12f812;
}

.support svg {
  width: 17px;
  height: 17px;
}

.cursor {
  position: absolute;
  left: 1014px;
  top: 328px;
  width: 9px;
  height: 14px;
}

/* Windows taskbar */
.taskbar {
  display: grid;
  grid-template-columns: 1fr auto 1fr;
  align-items: center;
  flex: none;
  height: 32px;
  padding-bottom: 1px;
  border-top: 1px solid #3f3a3d;
  background: linear-gradient(to right, #33212a, #2b2526 8%, #30221f 14%, #29242b 22%, #2c2627 28%, #33271a 34%, #262125 45%, #241f22 58%, #292329 68%, #2b2028 80%, #252231);
  color: #e9e4ea;
}

.apps-row {
  grid-column: 2;
  display: flex;
  gap: 2px;
}

.apps-row button {
  position: relative;
  width: 19px;
  height: 27px;
  border-radius: 3px;
}

.apps-row .open {
  background-color: #353036;
}

.apps-row .current {
  background-color: #64303f;
}

.running::after, .open::after {
  content: "";
  position: absolute;
  bottom: 1px;
  left: 50%;
  width: 2px;
  height: 2px;
  margin-left: -1px;
  border-radius: 1px;
  background-color: #a5a0a6;
}

.open::after {
  width: 7px;
  margin-left: -4px;
  background-color: #a947c9;
}

.current::after {
  width: 13px;
  margin-left: -7px;
  background-color: #f29cb0;
}

.tray {
  display: flex;
  align-items: center;
  justify-content: flex-end;
  gap: 10px;
  padding-right: 12px;
}

.tray svg {
  width: 11px;
  height: 11px;
}

.tray-mic {
  color: #c287a0;
}

.net {
  gap: 5px;
}

.clock {
  display: block;
  font-family: "Open Sans", "Noto Sans", sans-serif;
  font-size: 8px;
  line-height: 11px;
  text-align: right;
}
```
